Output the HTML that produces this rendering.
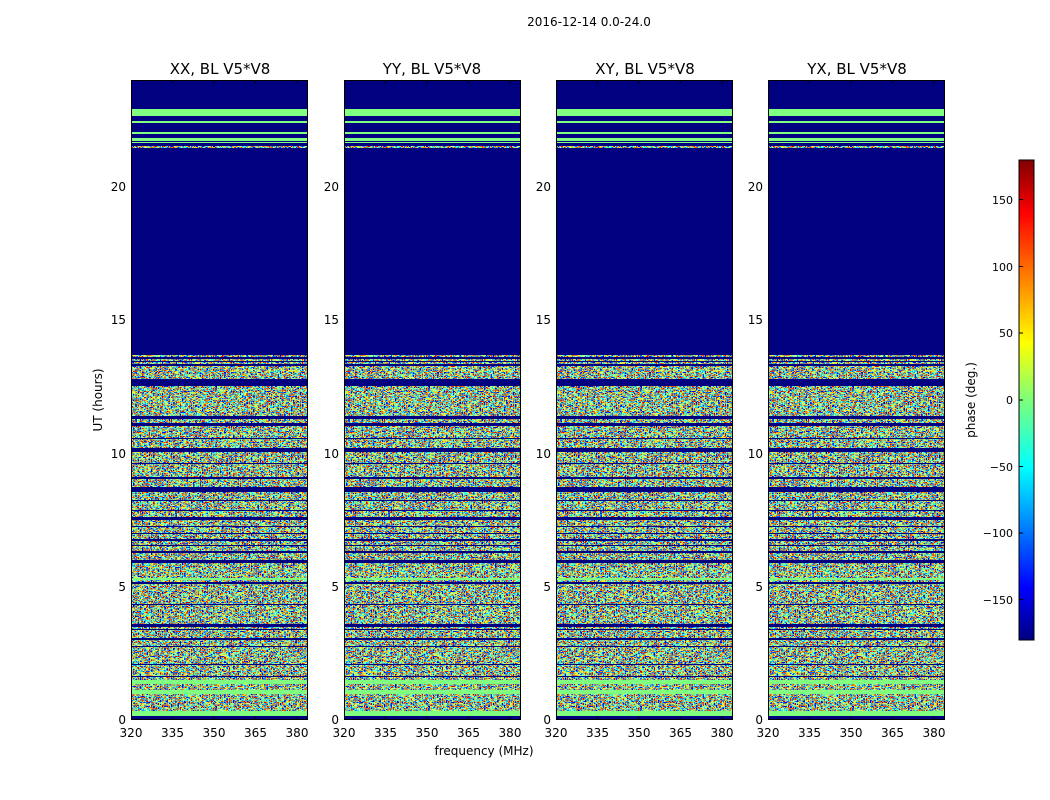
<!DOCTYPE html>
<html><head><meta charset="utf-8"><style>
html,body{margin:0;padding:0;background:#fff;}
svg{display:block;font-family:"DejaVu Sans","Liberation Sans",sans-serif;}
</style></head><body>
<svg width="1050" height="800" viewBox="0 0 1050 800" xmlns="http://www.w3.org/2000/svg">
<defs>
<filter id="jet" x="0" y="0" width="100%" height="100%" filterUnits="objectBoundingBox">
<feTurbulence type="fractalNoise" baseFrequency="0.45 0.8" numOctaves="1" seed="3" result="t"/>
<feColorMatrix in="t" type="matrix" values="2.4 0 0 0 -0.7  2.4 0 0 0 -0.7  2.4 0 0 0 -0.7  0 0 0 0 1"/>
<feComponentTransfer>
<feFuncR type="discrete" tableValues="0 0 0 0 0.5 1 1 1 0.5"/>
<feFuncG type="discrete" tableValues="0 0 0.5 1 1 1 0.5 0 0"/>
<feFuncB type="discrete" tableValues="0.5 1 1 1 0.5 0 0 0 0"/>
<feFuncA type="linear" slope="0" intercept="1"/>
</feComponentTransfer>
</filter>
<linearGradient id="cb" x1="0" y1="1" x2="0" y2="0">
<stop offset="0" stop-color="#000080"/><stop offset="0.11" stop-color="#0000ff"/>
<stop offset="0.36" stop-color="#00ffff"/><stop offset="0.5" stop-color="#7dff7a"/>
<stop offset="0.62" stop-color="#ffff00"/><stop offset="0.89" stop-color="#ff0000"/>
<stop offset="1" stop-color="#800000"/></linearGradient>
<g id="panel">
<rect x="0" y="80" width="177" height="640" fill="#000080"/>
<rect x="1" y="355" width="175" height="365" fill="#000" filter="url(#jet)"/>
<rect x="1" y="146" width="175" height="2" fill="#000" filter="url(#jet)"/>
<g fill="#000080">
<rect x="1" y="357" width="175" height="2"/><rect x="1" y="361" width="175" height="1"/>
<rect x="1" y="364" width="175" height="2"/><rect x="1" y="379" width="175" height="7"/>
<rect x="1" y="416" width="175" height="3"/><rect x="1" y="423" width="175" height="3"/>
<rect x="1" y="438" width="175" height="1"/><rect x="1" y="448" width="175" height="4"/>
<rect x="1" y="463" width="175" height="1"/><rect x="1" y="477" width="175" height="2"/>
<rect x="1" y="487" width="175" height="5"/><rect x="1" y="500" width="175" height="1"/>
<rect x="1" y="510" width="175" height="1"/><rect x="1" y="517" width="175" height="3"/>
<rect x="1" y="526" width="175" height="1"/><rect x="1" y="533" width="175" height="1"/>
<rect x="1" y="539" width="175" height="2"/><rect x="1" y="545" width="175" height="1"/>
<rect x="1" y="551" width="175" height="2"/><rect x="1" y="560" width="175" height="3"/>
<rect x="1" y="582" width="175" height="2"/><rect x="1" y="604" width="175" height="1"/>
<rect x="1" y="624" width="175" height="3"/><rect x="1" y="629" width="175" height="1"/>
<rect x="1" y="638" width="175" height="2"/><rect x="1" y="646" width="175" height="1"/>
<rect x="1" y="664" width="175" height="1"/><rect x="1" y="676" width="175" height="1"/>
<rect x="1" y="716" width="175" height="4"/>
</g>
<g fill="#80ff80">
<rect x="1" y="109" width="175" height="7"/><rect x="1" y="121" width="175" height="2"/>
<rect x="1" y="132" width="175" height="2"/><rect x="1" y="138" width="175" height="3"/>
<rect x="1" y="142" width="175" height="1"/>
<rect x="1" y="578" width="175" height="2"/>
<rect x="1" y="680" width="175" height="4"/><rect x="1" y="690" width="175" height="4"/>
<rect x="1" y="711" width="175" height="5"/>
</g>
<rect x="0.5" y="80.5" width="176" height="639" fill="none" stroke="#000" stroke-width="1"/>
<g stroke="#000" stroke-width="1">
<line x1="41.5" y1="720" x2="41.5" y2="716"/><line x1="83" y1="720" x2="83" y2="716"/>
<line x1="124.5" y1="720" x2="124.5" y2="716"/><line x1="166" y1="720" x2="166" y2="716"/>
<line x1="41.5" y1="80" x2="41.5" y2="84"/><line x1="83" y1="80" x2="83" y2="84"/>
<line x1="124.5" y1="80" x2="124.5" y2="84"/><line x1="166" y1="80" x2="166" y2="84"/>
</g>
<g font-size="12" fill="#000" text-anchor="middle">
<text x="0" y="737">320</text><text x="41.5" y="737">335</text><text x="83" y="737">350</text>
<text x="124.5" y="737">365</text><text x="166" y="737">380</text>
</g>
<g font-size="12" fill="#000" text-anchor="end">
<text x="-5" y="724">0</text><text x="-5" y="591">5</text><text x="-5" y="458">10</text>
<text x="-5" y="324">15</text><text x="-5" y="191">20</text>
</g>
</g>
</defs>
<rect width="1050" height="800" fill="#fff"/>
<text x="589" y="26" font-size="12" text-anchor="middle">2016-12-14 0.0-24.0</text>
<use href="#panel" x="131"/>
<use href="#panel" x="344"/>
<use href="#panel" x="556"/>
<use href="#panel" x="768"/>
<g font-size="15" text-anchor="middle">
<text x="220" y="74">XX, BL V5*V8</text>
<text x="432" y="74">YY, BL V5*V8</text>
<text x="645" y="74">XY, BL V5*V8</text>
<text x="857" y="74">YX, BL V5*V8</text>
</g>
<text x="484" y="755" font-size="12" text-anchor="middle">frequency (MHz)</text>
<text transform="translate(102,400) rotate(-90)" font-size="12" text-anchor="middle">UT (hours)</text>
<text transform="translate(975,400) rotate(-90)" font-size="12" text-anchor="middle">phase (deg.)</text>
<rect x="1019" y="160" width="15" height="480" fill="url(#cb)" stroke="#000" stroke-width="1"/>
<g stroke="#000"><line x1="1019" y1="199.5" x2="1023" y2="199.5"/><line x1="1019" y1="266.5" x2="1023" y2="266.5"/>
<line x1="1019" y1="333" x2="1023" y2="333"/><line x1="1019" y1="400" x2="1023" y2="400"/>
<line x1="1019" y1="466.5" x2="1023" y2="466.5"/><line x1="1019" y1="533" x2="1023" y2="533"/>
<line x1="1019" y1="599.5" x2="1023" y2="599.5"/></g>
<g font-size="11" text-anchor="end">
<text x="1013" y="204">150</text><text x="1013" y="271">100</text><text x="1013" y="337">50</text>
<text x="1013" y="404">0</text><text x="1013" y="471">−50</text><text x="1013" y="537">−100</text>
<text x="1013" y="604">−150</text>
</g>
</svg>
</body></html>
